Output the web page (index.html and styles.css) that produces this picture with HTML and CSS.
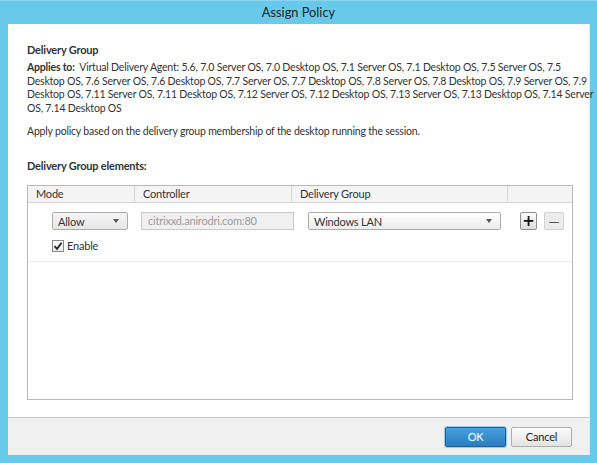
FILE: index.html
```html
<!DOCTYPE html>
<html>
<head>
<meta charset="utf-8">
<link rel="stylesheet" href="styles.css">
</head>
<body>
<div class="window">
  <div class="titlebar">Assign Policy</div>
  <div class="dialog">
    <div class="content">
      <div class="heading">Delivery Group</div>
      <div class="applies">
        <span class="line"><b>Applies to:</b>&nbsp; Virtual Delivery Agent: 5.6, 7.0 Server OS, 7.0 Desktop OS, 7.1 Server OS, 7.1 Desktop OS, 7.5 Server OS, 7.5</span>
        <span class="line">Desktop OS, 7.6 Server OS, 7.6 Desktop OS, 7.7 Server OS, 7.7 Desktop OS, 7.8 Server OS, 7.8 Desktop OS, 7.9 Server OS, 7.9</span>
        <span class="line">Desktop OS, 7.11 Server OS, 7.11 Desktop OS, 7.12 Server OS, 7.12 Desktop OS, 7.13 Server OS, 7.13 Desktop OS, 7.14 Server</span>
        <span class="line">OS, 7.14 Desktop OS</span>
      </div>
      <div class="desc">Apply policy based on the delivery group membership of the desktop running the session.</div>
      <div class="heading sub">Delivery Group elements:</div>
      <div class="grid">
        <div class="ghead">
          <div class="hcell">Mode</div>
          <div class="hcell">Controller</div>
          <div class="hcell">Delivery Group</div>
          <div class="hcell last"></div>
        </div>
        <div class="grow">
          <div class="cell mode">
            <div class="select small"><span>Allow</span><span class="arrow"></span></div>
            <label class="check">
              <span class="box"><svg width="10" height="10" viewBox="0 0 10 10"><path d="M1.5 5.2 L4 7.8 L8.6 1.8" fill="none" stroke="#222" stroke-width="1.8"/></svg></span>
              <span>Enable</span>
            </label>
          </div>
          <div class="cell ctrl">
            <div class="input">citrixxd.anirodri.com:80</div>
          </div>
          <div class="cell dg">
            <div class="select wide"><span>Windows LAN</span><span class="arrow"></span></div>
          </div>
          <div class="cell act">
            <div class="btn plus">+</div>
            <div class="btn minus">&#8212;</div>
          </div>
        </div>
      </div>
    </div>
    <div class="footer">
      <div class="button ok">OK</div>
      <div class="button cancel">Cancel</div>
    </div>
  </div>
</div>
</body>
</html>
```
FILE: styles.css
```css
* { box-sizing: border-box; }
html, body { margin: 0; padding: 0; }
body {
  background: #67caea;
  font-family: "Lato", "Noto Sans", sans-serif;
  font-size: 10.5px;
  letter-spacing: -0.2px;
  color: #333;
}
.window {
  width: 597px;
  height: 463px;
  display: flex;
  flex-direction: column;
  background: #67caea;
  border-top: 1px solid #8ad6f0;
}
.titlebar {
  height: 23px;
  line-height: 22px;
  text-align: center;
  font-size: 12.8px;
  letter-spacing: 0;
  color: #1e1e1e;
}
.dialog {
  flex: 1;
  margin: 0 7px 8px 8px;
  background: #fff;
  display: flex;
  flex-direction: column;
  border-right: 1px solid #d9eef6;
}
.content {
  flex: 1;
  padding: 19px 17px 0 19px;
  display: flex;
  flex-direction: column;
}
.heading {
  font-weight: bold;
  line-height: 14px;
  height: 14px;
  color: #333;
  font-size: 11px;
}
.applies {
  margin-top: 4px;
  line-height: 13.5px;
}
.applies .line { display: block; white-space: nowrap; }
.applies b { font-weight: bold; }
.desc {
  margin-top: 9px;
  line-height: 14px;
}
.heading.sub { margin-top: 21px; }
.grid {
  margin-top: 12px;
  width: 546px;
  height: 215px;
  border: 1px solid #b8b8b8;
  background: #fff;
}
.ghead {
  display: grid;
  grid-template-columns: 107px 157px 216px 1fr;
  height: 17px;
  background: #f4f4f4;
  border-bottom: 1px solid #d4d4d4;
}
.hcell {
  padding-left: 8px;
  line-height: 16px;
  border-right: 1px solid #d4d4d4;
  color: #333;
  font-size: 11px;
}
.hcell.last { border-right: none; }
.grow {
  display: grid;
  grid-template-columns: 107px 157px 216px 1fr;
  height: 59px;
  border-bottom: 1px solid #ececec;
  padding-top: 9px;
}
.cell { position: relative; }
.mode { padding-left: 24px; }
.select {
  height: 18px;
  border: 1px solid #acacac;
  border-radius: 2px;
  background: linear-gradient(#f6f6f6, #e6e6e6);
  display: flex;
  align-items: center;
  justify-content: space-between;
  padding: 0 8px 0 5px;
  color: #333;
  font-size: 11px;
}
.select.small { width: 76px; }
.select.wide { width: 193px; background: linear-gradient(#ffffff, #ececec); }
.arrow {
  width: 0;
  height: 0;
  border-left: 3.5px solid transparent;
  border-right: 3.5px solid transparent;
  border-top: 4px solid #555;
}
.check {
  display: flex;
  align-items: center;
  margin-top: 9px;
  gap: 3px;
  font-size: 11px;
}
.box {
  width: 12px;
  height: 12px;
  border: 1px solid #8a8a8a;
  background: linear-gradient(#ffffff, #e9e9e9);
  display: flex;
  align-items: center;
  justify-content: center;
}
.box svg { display: block; }
.ctrl { padding-left: 6px; }
.input {
  width: 153px;
  height: 18px;
  border: 1px solid #c9c9c9;
  background: #f0f0f0;
  color: #9a9a9a;
  line-height: 16px;
  padding-left: 6px;
  font-size: 11px;
}
.dg { padding-left: 16px; }
.act {
  padding-left: 12px;
  display: flex;
  align-items: flex-start;
  gap: 7px;
}
.btn {
  height: 18px;
  display: flex;
  align-items: center;
  justify-content: center;
  border-radius: 2px;
  font-family: "DejaVu Sans", sans-serif;
  color: #111;
}
.plus {
  width: 17px;
  border: 1px solid #8f8f8f;
  background: linear-gradient(#fdfdfd, #dedede);
  font-size: 15px;
  font-weight: bold;
}
.minus {
  width: 20px;
  border: 1px solid #d0d0d0;
  background: #ececec;
  font-size: 11px;
  color: #333;
}
.footer {
  height: 38px;
  background: #f0f0f0;
  border-top: 1px solid #c8c8c8;
  display: flex;
  align-items: center;
  justify-content: flex-end;
  gap: 5px;
  padding-right: 17px;
}
.button {
  height: 20px;
  display: flex;
  align-items: center;
  justify-content: center;
  border-radius: 2px;
  font-size: 11px;
}
.ok {
  width: 61px;
  color: #fff;
  border: 1px solid #1b5f93;
  background: linear-gradient(#4aa0dc, #2a7dc0);
  box-shadow: 0 0 0 1px #9ccbea;
}
.cancel {
  width: 61px;
  color: #222;
  border: 1px solid #adadad;
  background: linear-gradient(#fbfbfb, #e3e3e3);
}
```
